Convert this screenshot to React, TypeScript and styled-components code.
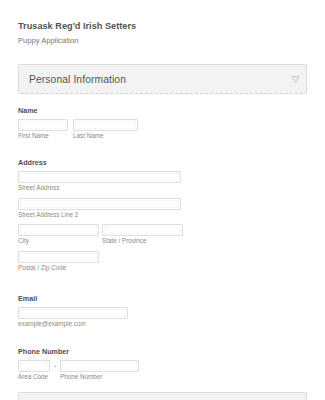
import React from "react";
import styled, { createGlobalStyle } from "styled-components";

const Global = createGlobalStyle`
  html, body { margin: 0; padding: 0; background: #ffffff; }
  body { font-family: "Liberation Sans", Arial, sans-serif; }
`;

const Page = styled.div`
  width: 325px;
  height: 400px;
  overflow: hidden;
  box-sizing: border-box;
  padding: 21px 18px 0 18px;
  display: flex;
  flex-direction: column;
`;

const Title = styled.div`
  font-size: 9.2px;
  line-height: 11px;
  font-weight: bold;
  color: #555555;
`;

const Subtitle = styled.div`
  margin-top: 4px;
  font-size: 7.6px;
  line-height: 10px;
  color: #777777;
`;

const Divider = styled.div`
  margin-top: 12px;
  height: 1px;
  background: #ececec;
`;

const SectionBox = styled.div<{ $top: number }>`
  margin-top: ${(p) => p.$top}px;
  height: 30px;
  box-sizing: border-box;
  border: 1px solid #dcdcdc;
  border-bottom: 1px dashed #cfcfcf;
  border-radius: 2px;
  background: #f3f3f3;
  display: flex;
  align-items: center;
  justify-content: space-between;
  padding: 0 6px 0 10px;
  flex-shrink: 0;
`;

const SectionTitle = styled.div`
  font-size: 10.3px;
  letter-spacing: 0.1px;
  color: #555555;
`;

const Field = styled.div<{ $top: number }>`
  margin-top: ${(p) => p.$top}px;
  display: flex;
  flex-direction: column;
  gap: 3px;
`;

const Label = styled.div`
  font-size: 7.2px;
  line-height: 10px;
  font-weight: bold;
  color: #4f4f4f;
`;

const Rows = styled.div`
  display: flex;
  flex-direction: column;
  gap: 5.5px;
`;

const Row = styled.div<{ $gap: number }>`
  display: flex;
  align-items: flex-start;
  gap: ${(p) => p.$gap}px;
`;

const Col = styled.div`
  display: flex;
  flex-direction: column;
`;

const Input = styled.div<{ $w: number }>`
  width: ${(p) => p.$w}px;
  height: 12px;
  box-sizing: border-box;
  border: 1px solid #dedede;
  border-radius: 1px;
  background: #ffffff;
  outline: 1px dotted #f0f0f0;
  outline-offset: -3px;
`;

const Sub = styled.div`
  margin-top: 1px;
  font-size: 6.3px;
  line-height: 8px;
  color: #8a8a8a;
  white-space: nowrap;
`;

const Dash = styled.div`
  font-size: 7px;
  line-height: 12px;
  color: #777777;
  width: 2px;
`;

const Chevron = () => (
  <svg width="9" height="9" viewBox="0 0 9 9">
    <path d="M1 1.5 H8 L4.5 8 Z" fill="none" stroke="#c9c9c9" strokeWidth="0.9" strokeLinejoin="round" />
    <path d="M2.8 2.8 H6.2 L4.5 6 Z" fill="none" stroke="#dedede" strokeWidth="0.7" strokeLinejoin="round" />
  </svg>
);

export default function App() {
  return (
    <>
      <Global />
      <Page>
        <Title>Trusask Reg'd Irish Setters</Title>
        <Subtitle>Puppy Application</Subtitle>
        <Divider />
        <SectionBox $top={6}>
          <SectionTitle>Personal Information</SectionTitle>
          <Chevron />
        </SectionBox>

        <Field $top={12}>
          <Label>Name</Label>
          <Row $gap={5}>
            <Col>
              <Input $w={50} />
              <Sub>First Name</Sub>
            </Col>
            <Col>
              <Input $w={65} />
              <Sub>Last Name</Sub>
            </Col>
          </Row>
        </Field>

        <Field $top={18}>
          <Label>Address</Label>
          <Rows>
            <Col>
              <Input $w={163} />
              <Sub>Street Address</Sub>
            </Col>
            <Col>
              <Input $w={163} />
              <Sub>Street Address Line 2</Sub>
            </Col>
            <Row $gap={3}>
              <Col>
                <Input $w={81} />
                <Sub>City</Sub>
              </Col>
              <Col>
                <Input $w={81} />
                <Sub>State / Province</Sub>
              </Col>
            </Row>
            <Col>
              <Input $w={81} />
              <Sub>Postal / Zip Code</Sub>
            </Col>
          </Rows>
        </Field>

        <Field $top={22}>
          <Label>Email</Label>
          <Col>
            <Input $w={110} />
            <Sub>example@example.com</Sub>
          </Col>
        </Field>

        <Field $top={19}>
          <Label>Phone Number</Label>
          <Row $gap={4}>
            <Col>
              <Input $w={32} />
              <Sub>Area Code</Sub>
            </Col>
            <Dash>-</Dash>
            <Col>
              <Input $w={79} />
              <Sub>Phone Number</Sub>
            </Col>
          </Row>
        </Field>

        <SectionBox $top={11} />
      </Page>
    </>
  );
}
